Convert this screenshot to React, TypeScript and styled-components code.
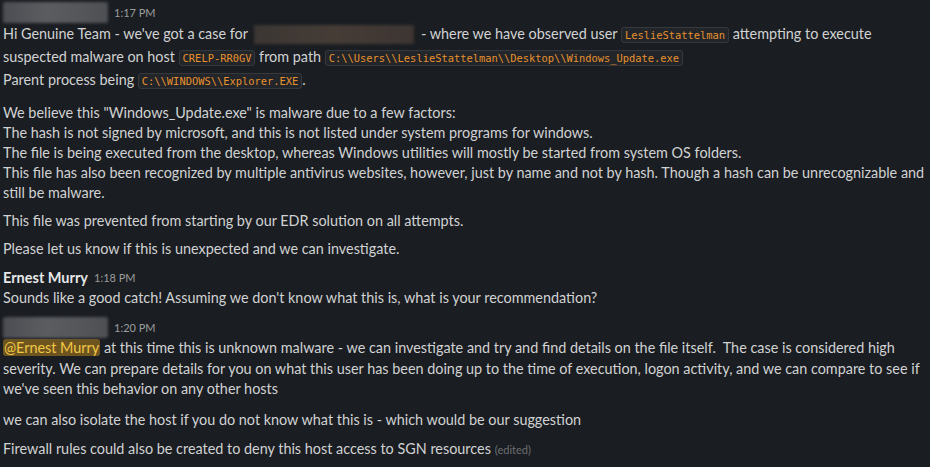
import * as React from "react";
import styled, { createGlobalStyle } from "styled-components";

const Global = createGlobalStyle`
    html, body {
        margin: 0;
        padding: 0;
        background: #1a1d21;
    }
    body {
        font-family: Lato, "Noto Sans", sans-serif;
        color: #d1d2d3;
        font-size: 14.4px;
        line-height: 20px;
        -webkit-font-smoothing: antialiased;
    }
`;

const Page = styled.div`
    width: 930px;
    height: 467px;
    overflow: hidden;
    padding: 2px 1px 0 3px;
    box-sizing: border-box;
`;

const Message = styled.div`
    display: flex;
    flex-direction: column;
`;

const Header = styled.div<{top?:number}>`
    display: flex;
    align-items: baseline;
    gap: 6px;
    margin-top: ${props=>props.top ?? 0}px;
`;

const BlurName = styled.span`
    display: inline-block;
    width: 105px;
    height: 21px;
    align-self: center;
    background: linear-gradient(90deg, #4b4d52 0%, #5a5c60 40%, #55575b 70%, #4d4f53 100%);
    filter: blur(1.5px);
    border-radius: 2px;
`;

const Name = styled.span`
    font-weight: 700;
    font-size: 14.5px;
    color: #e6e7e8;
`;

const Time = styled.span`
    font-size: 11px;
    color: #9c9d9f;
    align-self: center;
`;

const Para = styled.p<{lh?:number, top?:number}>`
    margin: ${props=>props.top ?? 0}px 0 0 0;
    line-height: ${props=>props.lh ?? 20}px;
`;

const Code = styled.code`
    font-family: "DejaVu Sans Mono", "Liberation Mono", monospace;
    font-size: 10.4px;
    color: #e8912d;
    background: #222529;
    border: 1px solid #36383c;
    border-radius: 3px;
    padding: 1px 3px;
`;

const BlurBox = styled.span`
    display: inline-block;
    width: 160px;
    height: 19px;
    vertical-align: -5px;
    margin: 0 7px 0 6px;
    background: linear-gradient(90deg, #3b3633 0%, #453c36 50%, #3d3532 100%);
    filter: blur(1.5px);
`;

const Mention = styled.span`
    background: #6e5520;
    color: #f2c744;
    border-radius: 3px;
    padding: 0 1px;
`;

const Edited = styled.span`
    font-size: 11px;
    color: #6e7073;
    margin-left: 4px;
`;

export default function App() {
    return (
        <Page>
            <Global />
            <Message>
                <Header>
                    <BlurName />
                    <Time>1:17 PM</Time>
                </Header>
                <Para lh={21}>
                    Hi Genuine Team - we've got a case for<BlurBox />- where we have observed user <Code>LeslieStattelman</Code> attempting to execute suspected malware on host <Code>CRELP-RR0GV</Code> from path <Code>C:\\Users\\LeslieStattelman\\Desktop\\Windows_Update.exe</Code>
                    <br />
                    Parent process being <Code>C:\\WINDOWS\\Explorer.EXE</Code>.
                </Para>
                <Para top={11}>
                    We believe this "Windows_Update.exe" is malware due to a few factors:
                    <br />
                    The hash is not signed by microsoft, and this is not listed under system programs for windows.
                    <br />
                    The file is being executed from the desktop, whereas Windows utilities will mostly be started from system OS folders.
                    <br />
                    This file has also been recognized by multiple antivirus websites, however, just by name and not by hash. Though a hash can be unrecognizable and still be malware.
                </Para>
                <Para top={8}>This file was prevented from starting by our EDR solution on all attempts.</Para>
                <Para top={8}>Please let us know if this is unexpected and we can investigate.</Para>
            </Message>
            <Message>
                <Header top={9}>
                    <Name>Ernest Murry</Name>
                    <Time>1:18 PM</Time>
                </Header>
                <Para>Sounds like a good catch! Assuming we don't know what this is, what is your recommendation?</Para>
            </Message>
            <Message>
                <Header top={9}>
                    <BlurName />
                    <Time>1:20 PM</Time>
                </Header>
                <Para lh={20.5}>
                    <Mention>@Ernest Murry</Mention> at this time this is unknown malware - we can investigate and try and find details on the file itself.&nbsp; The case is considered high severity. We can prepare details for you on what this user has been doing up to the time of execution, logon activity, and we can compare to see if we've seen this behavior on any other hosts
                </Para>
                <Para top={10}>we can also isolate the host if you do not know what this is - which would be our suggestion</Para>
                <Para top={9}>Firewall rules could also be created to deny this host access to SGN resources<Edited>(edited)</Edited></Para>
            </Message>
        </Page>
    );
}
